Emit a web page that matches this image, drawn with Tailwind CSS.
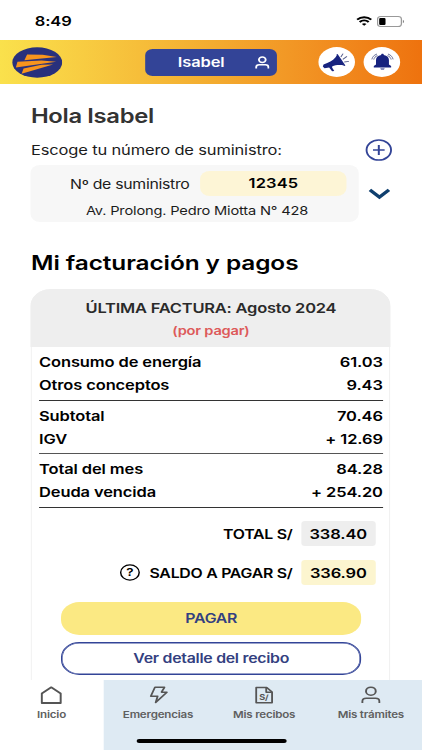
<!DOCTYPE html>
<html lang="es">
<head>
    <meta charset="UTF-8">
    <meta name="viewport" content="width=device-width, initial-scale=1.0">
    <title>Mi facturación y pagos</title>
    <script src="https://cdn.jsdelivr.net/npm/@tailwindcss/browser@4"></script>
</head>
<body class="bg-white overflow-hidden">
    <div class="w-[346px] h-[750px] origin-top-left scale-x-[1.22] overflow-hidden flex flex-col bg-white text-black font-['Inter','Liberation_Sans',sans-serif]">

        <!-- Barra de estado -->
        <div class="h-10 shrink-0 flex items-center justify-between pl-[28.5px] pr-[14px]">
            <span class="text-[13.5px] font-semibold leading-none pt-[3px] tracking-[-0.1px]">8:49</span>
            <div class="flex items-center gap-[4px] pt-[2px]">
                <svg class="w-[13px] h-[10px]" viewBox="0 0 13 10" fill="none" stroke="#000" stroke-width="1.9">
                    <path d="M0.7 3.6C4 0.4 9 0.4 12.3 3.6"/>
                    <path d="M2.8 6C5 3.9 8 3.9 10.2 6"/>
                    <path d="M6.5 9.8L4.6 7.9C5.6 6.9 7.4 6.9 8.4 7.9Z" fill="#000" stroke="none"/>
                </svg>
                <svg class="w-[23px] h-[11px]" viewBox="0 0 23 11">
                    <rect x="0.5" y="0.5" width="19.5" height="10" rx="2.6" fill="#fff" stroke="#999"/>
                    <rect x="1.8" y="2" width="5.2" height="7" rx="1" fill="#000"/>
                    <path d="M21.2 3.8C22.4 4.3 22.4 6.7 21.2 7.2Z" fill="#777"/>
                </svg>
            </div>
        </div>

        <!-- Cabecera -->
        <header class="h-11 shrink-0 flex items-center bg-linear-to-r from-[#fae14c] via-[#f3ac30] to-[#ee720e] pl-[10px]">
            <svg class="w-[41px] h-[31px]" viewBox="0 0 41 31">
                <ellipse cx="20.5" cy="15.5" rx="20.5" ry="15.2" fill="#28307c"/>
                <path d="M12.2 7.6L25 7.8L36.5 10L10 13.2Z" fill="#f7941d"/>
                <path d="M4.3 14.8L24 13.4L36 14.8L3 20.4Z" fill="#f7941d"/>
                <path d="M9.3 21.4L24 17.8L33.5 17.6L7.7 26.7Z" fill="#f7941d"/>
            </svg>
            <button class="ml-[68px] w-[108px] h-[27px] rounded-[6px] bg-[#334497] text-white flex items-center justify-end pr-[6px]">
                <span class="text-[13.5px] font-semibold leading-none tracking-[-0.1px] mr-[25px] pt-px">Isabel</span>
                <svg class="w-[12px] h-[13px]" viewBox="0 0 12 13" fill="none" stroke="#fff" stroke-width="1.5">
                    <circle cx="6" cy="3.8" r="2.8"/>
                    <path d="M1 12.4V11C1 9.6 2 8.7 3.4 8.7H8.6C10 8.7 11 9.6 11 11V12.4"/>
                </svg>
            </button>
            <div class="ml-[33.5px] size-[30px] rounded-full bg-white flex items-center justify-center">
                <svg class="w-[23px] h-[21px]" viewBox="0 0 23 21">
                    <path d="M12.4 2.8L18.2 13.4C14 12.6 11 13 8.4 14.2L8.2 15.6L10 19L8.2 19.2L5.8 15.6L2 16.2L0.6 14.6L1.2 12.4L4.2 11C8 9.4 10.6 7 12.4 2.8Z" fill="#17237f"/>
                    <path d="M12.2 2.4L18.6 13.8" stroke="#17237f" stroke-width="1.2"/>
                    <path d="M15.4 5L17.2 1.6M17 7.4L20.4 4.4M18.2 10L22 9.4" stroke="#5a628f" stroke-width="0.9"/>
                </svg>
            </div>
            <div class="ml-[7.5px] size-[30px] rounded-full bg-white flex items-center justify-center">
                <svg class="w-[19px] h-[18px]" viewBox="0 0 19 18">
                    <path d="M9.5 0.8C10.2 0.8 10.6 1.2 10.6 1.9C13.4 2.4 14.8 4.4 14.8 7V11.4L16.6 13V14.6H2.4V13L4.2 11.4V7C4.2 4.4 5.6 2.4 8.4 1.9C8.4 1.2 8.8 0.8 9.5 0.8Z" fill="#17237f"/>
                    <path d="M7.7 15.4H11.3C11 17 8 17 7.7 15.4Z" fill="#17237f"/>
                    <path d="M0.8 6.4C1.2 4 2.4 2.2 5 1M2.4 6.6C2.7 4.8 3.6 3.4 5.4 2.6M18.2 6.4C17.8 4 16.6 2.2 14 1M16.6 6.6C16.3 4.8 15.4 3.4 13.6 2.6" fill="none" stroke="#5a628f" stroke-width="0.8"/>
                </svg>
            </div>
        </header>

        <main class="flex-1 overflow-hidden pl-[25.4px]">
            <h1 class="mt-[20px] text-[19.5px] leading-[25px] font-semibold text-[#333] tracking-[-0.28px]">Hola Isabel</h1>

            <!-- Suministro -->
            <div class="mt-[10px] h-[22px] flex items-center">
                <p class="w-[274px] text-[13.5px] leading-none text-[#1c1c1c] tracking-[-0.12px] pt-[2px]">Escoge tu número de suministro:</p>
                <svg class="w-[23px] h-[22px]" viewBox="0 0 23 23" fill="none" stroke="#334497" stroke-width="1.6">
                    <circle cx="11.5" cy="11.5" r="10.5"/>
                    <path d="M6.5 11.5H16.5M11.5 6.3V16.7" stroke-width="1.7"/>
                </svg>
            </div>
            <div class="mt-[4px] flex items-center">
                <div class="w-[268.5px] h-[57px] rounded-[8px] bg-[#f7f7f7] pt-[6px] pl-[32px]">
                    <div class="flex items-center">
                        <span class="w-[106.5px] text-[13px] leading-none text-[#1c1c1c] tracking-[-0.25px] pt-px">Nº de suministro</span>
                        <span class="w-[120.5px] h-[25px] rounded-[8px] bg-[#fdf5d6] text-center text-[13.5px] leading-[25px] font-semibold tracking-[0.1px]">12345</span>
                    </div>
                    <p class="mt-[7.5px] ml-[13px] text-[12px] leading-[14px] text-[#1c1c1c] tracking-[-0.15px]">Av. Prolong. Pedro Miotta N° 428</p>
                </div>
                <svg class="ml-[8px] w-[18px] h-[12px]" viewBox="0 0 18 12" fill="none" stroke="#0f3f6e" stroke-width="3">
                    <path d="M1.2 1.8L9 9.2L16.8 1.8"/>
                </svg>
            </div>

            <h2 class="mt-[28px] text-[20px] leading-[26px] font-semibold tracking-[-0.07px]">Mi facturación y pagos</h2>

            <!-- Factura -->
            <section class="mt-[13px] w-[295px] h-[420px] rounded-t-[17px] border-x border-[#eee]">
                <div class="-mx-px h-[58px] rounded-t-[17px] bg-[#eee] text-center pt-[11px]">
                    <p class="text-[13.5px] leading-[17px] font-semibold text-[#2a2a2a] tracking-[-0.17px]">ÚLTIMA FACTURA: Agosto 2024</p>
                    <p class="mt-[6px] text-[12px] leading-[16px] font-semibold text-[#dd5a5a] tracking-[-0.18px]">(por pagar)</p>
                </div>
                <div class="px-[5.6px] pt-[4px] text-[13.5px] leading-[23px] font-semibold tracking-[-0.09px]">
                    <div class="h-[50px] border-b border-[#333]">
                        <div class="flex justify-between"><span>Consumo de energía</span><span>61.03</span></div>
                        <div class="flex justify-between"><span>Otros conceptos</span><span>9.43</span></div>
                    </div>
                    <div class="h-[53px] pt-[4px] border-b border-[#555]">
                        <div class="flex justify-between"><span>Subtotal</span><span>70.46</span></div>
                        <div class="flex justify-between"><span>IGV</span><span>+ 12.69</span></div>
                    </div>
                    <div class="h-[54px] pt-[4px] border-b border-[#333]">
                        <div class="flex justify-between"><span>Total del mes</span><span>84.28</span></div>
                        <div class="flex justify-between"><span>Deuda vencida</span><span>+ 254.20</span></div>
                    </div>
                    <div class="mt-[13px] pr-[6px] flex items-center justify-end gap-[7px]">
                        <span class="text-[13px] tracking-[-0.22px] pt-px">TOTAL S/</span>
                        <span class="w-[61px] h-[25px] rounded-[3px] bg-[#eee] text-center leading-[26px]">338.40</span>
                    </div>
                    <div class="mt-[14px] pr-[6px] flex items-center justify-end gap-[7px]">
                        <svg class="w-[17px] h-[17px] mr-[1px]" viewBox="0 0 17 17">
                            <circle cx="8.5" cy="8.5" r="7.6" fill="none" stroke="#000" stroke-width="1.2"/>
                            <text x="8.5" y="12.4" text-anchor="middle" font-size="11" font-weight="600">?</text>
                        </svg>
                        <span class="text-[13px] tracking-[-0.22px] pt-px">SALDO A PAGAR S/</span>
                        <span class="w-[61px] h-[25px] rounded-[3px] bg-[#fcf5cf] text-center leading-[26px]">336.90</span>
                    </div>
                </div>
                <div class="mt-[17px] pl-[24px] pr-[23.5px] flex flex-col gap-[7px] text-[13px] font-semibold text-[#334080] tracking-[-0.22px]">
                    <button class="h-[33px] rounded-[15px] bg-[#fbe983]">PAGAR</button>
                    <button class="h-[33px] rounded-[15px] border-[1.5px] border-[#334497] bg-white shadow-[inset_0_0_0_0.5px_#334497]">Ver detalle del recibo</button>
                </div>
            </section>
        </main>

        <!-- Navegación -->
        <nav class="relative h-[70px] shrink-0 flex bg-[#deeaf3] text-[9.5px] leading-[12px] font-semibold text-[#606060] text-center tracking-[-0.18px]">
            <a class="w-[84.5px] shrink-0 bg-white flex flex-col items-center pt-[6px]">
                <svg class="w-[18px] h-[18px]" viewBox="0 0 20 18" preserveAspectRatio="none" fill="none" stroke="#555" stroke-width="1.8" stroke-linejoin="round">
                    <path d="M1.4 17V7.4L10 1.3L18.6 7.4V17Z"/>
                </svg>
                <span class="mt-[5px]">Inicio</span>
            </a>
            <a class="w-[90px] shrink-0 flex flex-col items-center pt-[6px]">
                <svg class="w-[16px] h-[18px]" viewBox="0 0 16 18" fill="none" stroke="#555" stroke-width="1.5" stroke-linejoin="round">
                    <path d="M5 1.3H12.8L10.4 6.2H14.8L5.6 16.4L7.2 10.2H1.6Z"/>
                </svg>
                <span class="mt-[5px]">Emergencias</span>
            </a>
            <a class="w-[84px] shrink-0 flex flex-col items-center pt-[6px]">
                <svg class="w-[15px] h-[18px]" viewBox="0 0 15 18" fill="none" stroke="#555" stroke-width="1.5" stroke-linejoin="round">
                    <path d="M1 1.4H9.6L14 6V16.8H1Z"/>
                    <path d="M9.2 1.6V6.2H13.8"/>
                    <text x="7.3" y="14" text-anchor="middle" font-size="7.5" font-weight="700" fill="#555" stroke="none">S/</text>
                </svg>
                <span class="mt-[5px]">Mis recibos</span>
            </a>
            <a class="w-[87.5px] shrink-0 flex flex-col items-center pt-[6px] pl-[3.5px]">
                <svg class="w-[16px] h-[18px]" viewBox="0 0 16 18" fill="none" stroke="#555" stroke-width="1.6">
                    <circle cx="8" cy="5.2" r="4"/>
                    <path d="M1 17V15.4C1 13.4 2.4 12.2 4.2 12.2H11.8C13.6 12.2 15 13.4 15 15.4V17"/>
                </svg>
                <span class="mt-[5px]">Mis trámites</span>
            </a>
            <div class="absolute left-[111.5px] bottom-[7px] w-[123px] h-[4px] rounded-full bg-black"></div>
        </nav>
    </div>
</body>
</html>
